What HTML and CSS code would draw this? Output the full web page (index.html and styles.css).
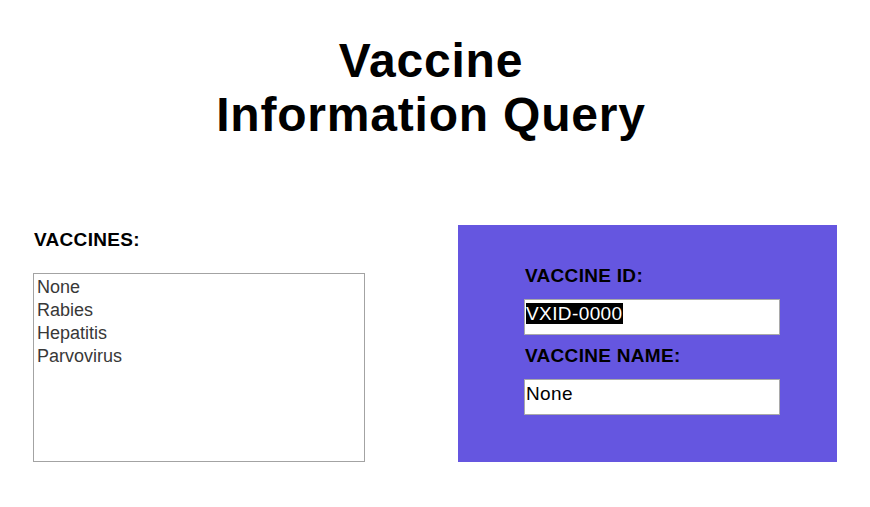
FILE: index.html
```html
<!DOCTYPE html>
<html lang="en">
<head>
<meta charset="utf-8">
<title>Vaccine Information Query</title>
<link rel="stylesheet" href="styles.css">
</head>
<body>
  <header class="header">
    <h1 class="title">Vaccine<br>Information Query</h1>
  </header>
  <main class="main">
    <section class="list-col">
      <div class="label">VACCINES:</div>
      <div class="listbox" role="listbox">
        <div class="option">None</div>
        <div class="option">Rabies</div>
        <div class="option">Hepatitis</div>
        <div class="option">Parvovirus</div>
      </div>
    </section>
    <section class="panel">
      <div class="label">VACCINE ID:</div>
      <div class="field" role="textbox"><span class="selected">VXID-0000</span></div>
      <div class="label">VACCINE NAME:</div>
      <div class="field" role="textbox">None</div>
    </section>
  </main>
</body>
</html>
```

FILE: styles.css
```css
html, body {
  margin: 0;
  padding: 0;
  background: #ffffff;
}

body {
  font-family: "Liberation Sans", Arial, sans-serif;
  color: #000;
}

.header {
  padding-right: 8px;
  text-align: center;
}

.title {
  margin: 34px 0 0;
  font-size: 48px;
  line-height: 54px;
  font-weight: bold;
  letter-spacing: 0.8px;
}

.main {
  display: flex;
  justify-content: space-between;
  align-items: flex-end;
  padding: 0 33px;
  margin-top: 83px;
}

.label {
  font-size: 19px;
  line-height: 22px;
  font-weight: bold;
  letter-spacing: 0.3px;
}

.list-col {
  width: 332px;
  padding-top: 4px;
}

.list-col .label {
  padding-left: 1px;
  margin-bottom: 22px;
}

.listbox {
  box-sizing: border-box;
  height: 189px;
  border: 1px solid #a3a3a3;
  padding: 2px 3px;
  color: #383838;
  font-size: 18px;
  line-height: 23px;
}

.panel {
  box-sizing: border-box;
  width: 379px;
  height: 237px;
  background: #6556e0;
  padding: 40px 0 0 66px;
}

.panel .label {
  padding-left: 1px;
  margin-bottom: 12px;
}

.field {
  box-sizing: border-box;
  width: 256px;
  height: 36px;
  border: 1px solid #a9a9a9;
  background: #fff;
  padding: 3px 1px 0;
  font-size: 19px;
  line-height: 22px;
  letter-spacing: 0.4px;
  color: #000;
  margin-bottom: 10px;
  white-space: nowrap;
}

.selected {
  background: #000;
  color: #fff;
}
```
